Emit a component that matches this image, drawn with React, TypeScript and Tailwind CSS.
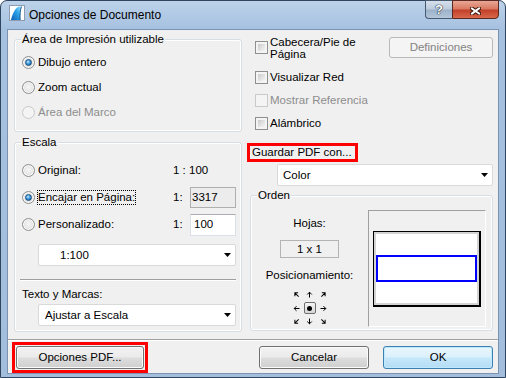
import React from "react";

function Radio({ checked = false, disabled = false }: { checked?: boolean; disabled?: boolean }) {
  return (
    <span
      className={
        disabled
          ? "flex h-[13px] w-[13px] shrink-0 items-center justify-center rounded-full border border-[#c9c9c9] bg-[#f4f4f4]"
          : "flex h-[13px] w-[13px] shrink-0 items-center justify-center rounded-full border border-[#8e8f8f] bg-[radial-gradient(circle_at_50%_45%,#f6f6f6_0%,#e6e6e6_55%,#cfcfcf_100%)] shadow-[inset_0_0_0_1px_#f8f8f8]"
      }
    >
      {checked && (
        <span className="h-[7px] w-[7px] rounded-full border border-[#1d4e7c] bg-[radial-gradient(circle_at_40%_35%,#c0eaff_0%,#3f9ae0_45%,#0f4f8f_100%)]" />
      )}
    </span>
  );
}

function Check({ disabled = false, className = "" }: { disabled?: boolean; className?: string }) {
  return (
    <span
      className={
        disabled
          ? `block h-[13px] w-[13px] shrink-0 border border-[#c9c9c9] bg-[#f4f4f4] ${className}`
          : `block h-[13px] w-[13px] shrink-0 border border-[#8e8f8f] bg-[#f4f4f4] p-[2px] ${className}`
      }
    >
      {!disabled && <span className="block h-full w-full bg-[linear-gradient(135deg,#cbcbcb,#f5f5f5)]" />}
    </span>
  );
}

function Btn({
  children,
  className = "",
  def = false,
  disabled = false,
}: {
  children: React.ReactNode;
  className?: string;
  def?: boolean;
  disabled?: boolean;
}) {
  const look = disabled
    ? "border-[#b5b9bc] bg-[#f4f4f4] text-[#838383]"
    : def
    ? "border-[#3c7fb1] bg-[linear-gradient(to_bottom,#eaf6fd_0%,#dbf0fc_48%,#c6e7fa_52%,#b3ddf5_100%)] shadow-[inset_0_0_0_1px_#bfe9ff]"
    : "border-[#707070] bg-[linear-gradient(to_bottom,#f2f2f2_0%,#ebebeb_48%,#dddddd_52%,#cfcfcf_100%)] shadow-[inset_0_0_0_1px_#fbfbfb]";
  return (
    <div className={`flex shrink-0 items-center justify-center rounded-[3px] border leading-[13px] ${look} ${className}`}>
      {children}
    </div>
  );
}

function Combo({ text, className = "", textClass = "" }: { text: string; className?: string; textClass?: string }) {
  return (
    <div className={`flex h-[22px] shrink-0 items-center rounded-[2px] border border-[#d9d9d9] bg-white ${className}`}>
      <span className={`leading-[13px] ${textClass}`}>{text}</span>
      <svg className="ml-auto mr-[4px]" width="7" height="4" viewBox="0 0 7 4">
        <path d="M0 0H7L3.5 4Z" fill="#000" />
      </svg>
    </div>
  );
}

function Group({ label, className = "", children }: { label: string; className?: string; children: React.ReactNode }) {
  return (
    <div className={`flex shrink-0 flex-col rounded-[3px] border border-[#d5dfe5] shadow-[inset_0_0_0_1px_#ffffff] ${className}`}>
      <div className="-mt-[8px] ml-[6px] w-fit bg-[#f0f0f0] px-[1px] leading-[15px]">{label}</div>
      {children}
    </div>
  );
}

function Arrow({ className = "" }: { className?: string }) {
  return (
    <svg className={className} width="7" height="7" viewBox="0 0 7 7">
      <path d="M3.5 6.5V1.2M1.2 3.5L3.5 1.2L5.8 3.5" stroke="#000" strokeWidth="1" fill="none" />
    </svg>
  );
}

function TitleIcon() {
  return (
    <svg className="mt-[4px] shrink-0" width="16" height="16" viewBox="0 0 16 16">
      <defs>
        <linearGradient id="acg" x1="0" y1="1" x2="1" y2="0">
          <stop offset="0" stopColor="#0b5fb5" />
          <stop offset="0.6" stopColor="#2fa6ea" />
          <stop offset="1" stopColor="#9be6ff" />
        </linearGradient>
      </defs>
      <rect x="0.5" y="0.5" width="15" height="15" fill="#ffffff" stroke="#8d9cb0" />
      <path d="M2 15 C3.5 9 5.5 4 9.5 1.5 L12.5 1.5 C11.2 5 10.8 10 11.2 15 Z" fill="url(#acg)" />
      <path d="M12.5 1.5 C11.2 5 10.8 10 11.2 15" stroke="#0a3f78" strokeWidth="0.8" fill="none" />
    </svg>
  );
}

export default function App() {
  return (
    <div className="h-[378px] w-[506px] overflow-hidden font-['Liberation_Sans',Arial,sans-serif] text-[11.5px] text-black">
      <div className="flex h-full flex-col rounded-t-[7px] border border-[#2f4560] bg-[linear-gradient(to_bottom,#bcd2ea,#a6c1e0_28px,#a3bedd)]">
        {/* Title bar */}
        <div className="flex h-[28px] shrink-0 items-start pl-[8px] pr-[6px]">
          <TitleIcon />
          <span className="ml-[4px] mt-[7px] text-[12px] leading-[15px]">Opciones de Documento</span>
          <div className="-mt-px ml-auto flex h-[19px]">
            <div className="flex w-[27px] items-start justify-center rounded-bl-[4px] border border-r-0 border-[#46596f] bg-[linear-gradient(to_bottom,#d6e0ec_0%,#bccbdc_48%,#9cb1c9_52%,#b3c6da_100%)] pt-[1px]">
              <span className="text-[13px] font-bold leading-[15px] text-white [text-shadow:0_0_1px_#1c2a3a,0_0_1px_#1c2a3a,0_0_1px_#1c2a3a]">?</span>
            </div>
            <div className="flex w-[47px] items-start justify-center rounded-br-[4px] border border-[#5a2a22] bg-[linear-gradient(to_bottom,#e9a796_0%,#d97a62_45%,#c2412a_55%,#d8684c_100%)] pt-[6px]">
              <svg width="11" height="8" viewBox="0 0 11 8">
                <path d="M2 1.5L9 6.5M9 1.5L2 6.5" stroke="#3b1610" strokeWidth="4" strokeLinecap="square" />
                <path d="M2 1.5L9 6.5M9 1.5L2 6.5" stroke="#ffffff" strokeWidth="2" strokeLinecap="square" />
              </svg>
            </div>
          </div>
        </div>

        {/* Client area */}
        <div className="mx-[6px] flex h-[345px] shrink-0 flex-col border border-[#7b93b2] bg-[#f0f0f0]">
          <div className="flex pl-[6px] pr-[5px]">
            {/* Left column */}
            <div className="flex w-[228px] shrink-0 flex-col">
              <Group label="Área de Impresión utilizable" className="mt-[9px] h-[93px]">
                <div className="mt-[3px] flex flex-col pl-[7px]">
                  <div className="flex h-[25px] items-center">
                    <Radio checked />
                    <span className="ml-[2px] border border-transparent leading-[13px]">Dibujo entero</span>
                  </div>
                  <div className="flex h-[25px] items-center">
                    <Radio />
                    <span className="ml-[2px] border border-transparent leading-[13px]">Zoom actual</span>
                  </div>
                  <div className="flex h-[25px] items-center">
                    <Radio disabled />
                    <span className="ml-[2px] border border-transparent leading-[13px] text-[#8d8d8d]">Área del Marco</span>
                  </div>
                </div>
              </Group>

              <Group label="Escala" className="mt-[10px] h-[190px]">
                <div className="mt-[7px] flex flex-col pl-[7px]">
                  <div className="flex h-[27px] items-center">
                    <div className="flex w-[151px] items-center">
                      <Radio />
                      <span className="ml-[2px] border border-transparent leading-[13px]">Original:</span>
                    </div>
                    <span className="leading-[13px]">1 : 100</span>
                  </div>
                  <div className="flex h-[27px] items-center">
                    <div className="flex w-[151px] items-center">
                      <Radio checked />
                      <span className="ml-[2px] border border-dotted border-black leading-[13px]">Encajar en Página:</span>
                    </div>
                    <span className="w-[17px] leading-[13px]">1:</span>
                    <div className="flex h-[21px] w-[46px] items-center border border-[#afafaf] bg-[#ececec] pl-[1px] leading-[13px]">
                      3317
                    </div>
                  </div>
                  <div className="flex h-[27px] items-center">
                    <div className="flex w-[151px] items-center">
                      <Radio />
                      <span className="ml-[2px] border border-transparent leading-[13px]">Personalizado:</span>
                    </div>
                    <span className="w-[17px] leading-[13px]">1:</span>
                    <div className="flex h-[22px] w-[46px] items-center border border-[#dbdfe6] border-t-[#abadb3] bg-white pl-[3px] leading-[13px]">
                      100
                    </div>
                  </div>
                </div>
                <Combo text="1:100" className="ml-[23px] mt-[6px] w-[198px]" textClass="pl-[21px]" />
                <div className="ml-[5px] mr-[5px] mt-[13px] border-t border-b border-t-[#a0a0a0] border-b-white" />
                <div className="mt-[6px] pl-[7px] leading-[15px]">Texto y Marcas:</div>
                <Combo text="Ajustar a Escala" className="ml-[23px] mt-[2px] w-[198px]" textClass="pl-[6px]" />
              </Group>
            </div>

            {/* Right column */}
            <div className="ml-[3px] flex w-[248px] shrink-0 flex-col">
              <div className="flex items-start">
                <div className="ml-[10px] mt-[6px] flex items-start">
                  <Check className="mt-[5px]" />
                  <span className="ml-[2px] leading-[12px]">
                    Cabecera/Pie de
                    <br />
                    Página
                  </span>
                </div>
                <Btn disabled className="ml-auto mt-[7px] h-[21px] w-[104px]">
                  Definiciones
                </Btn>
              </div>
              <div className="mt-[6px] flex h-[23px] items-center pl-[10px]">
                <Check />
                <span className="ml-[2px] leading-[13px]">Visualizar Red</span>
              </div>
              <div className="flex h-[23px] items-center pl-[10px]">
                <Check disabled />
                <span className="ml-[2px] leading-[13px] text-[#8d8d8d]">Mostrar Referencia</span>
              </div>
              <div className="flex h-[23px] items-center pl-[10px]">
                <Check />
                <span className="ml-[2px] leading-[13px]">Alámbrico</span>
              </div>
              <div className="ml-[2px] mt-[8px] w-[111px] border-[3px] border-[#ff0000] pl-[2px] leading-[13px]">
                Guardar PDF con...
              </div>
              <Combo text="Color" className="ml-[32px] mt-[2px] w-[216px]" textClass="pl-[5px]" />
              <Group label="Orden" className="ml-[5px] mt-[9px] h-[136px]">
                <div className="mt-[7px] flex">
                  <div className="flex w-[117px] flex-col items-center">
                    <div className="mt-[6px] leading-[15px]">Hojas:</div>
                    <div className="mt-[9px] flex h-[18px] w-[59px] items-center justify-center border border-[#b4b4b4] leading-[13px]">
                      1 x 1
                    </div>
                    <div className="mt-[10px] leading-[15px]">Posicionamiento:</div>
                    <div className="mt-[5px] grid grid-cols-[13px_14px_13px] grid-rows-[13px_14px_13px] place-items-center">
                      <Arrow className="-rotate-45" />
                      <Arrow />
                      <Arrow className="rotate-45" />
                      <Arrow className="-rotate-90" />
                      <div className="flex h-[12px] w-[12px] items-center justify-center rounded-[2px] border border-[#6f6f6f] bg-[linear-gradient(to_bottom,#f6f6f6,#d6d6d6)]">
                        <div className="h-[5px] w-[5px] rounded-full bg-black" />
                      </div>
                      <Arrow className="rotate-90" />
                      <Arrow className="rotate-[225deg]" />
                      <Arrow className="rotate-180" />
                      <Arrow className="rotate-[135deg]" />
                    </div>
                  </div>
                  <div className="h-[117px] w-[118px] border border-l-[#a0a0a0] border-t-[#a0a0a0] border-r-white border-b-white pl-[4px] pt-[20px]">
                    <div className="h-[76px] w-[108px] border-t border-l border-r-2 border-b-2 border-black">
                      <div className="h-full border-2 border-[#d4d4d4] bg-white">
                        <div className="mt-[21px] h-[27px] border-2 border-[#0000ff]" />
                      </div>
                    </div>
                  </div>
                </div>
              </Group>
            </div>
          </div>

          <div className="mt-[7px] border-t border-b border-t-[#a0a0a0] border-b-white" />

          <div className="flex items-start pr-[5px]">
            <div className="ml-[4px] mt-[1px] border-[3px] border-[#ff0000] p-[1px]">
              <Btn className="h-[23px] w-[128px]">Opciones PDF...</Btn>
            </div>
            <Btn className="ml-auto mt-[5px] h-[23px] w-[110px]">Cancelar</Btn>
            <Btn def className="ml-[14px] mt-[5px] h-[23px] w-[110px]">
              OK
            </Btn>
          </div>
        </div>
      </div>
    </div>
  );
}
